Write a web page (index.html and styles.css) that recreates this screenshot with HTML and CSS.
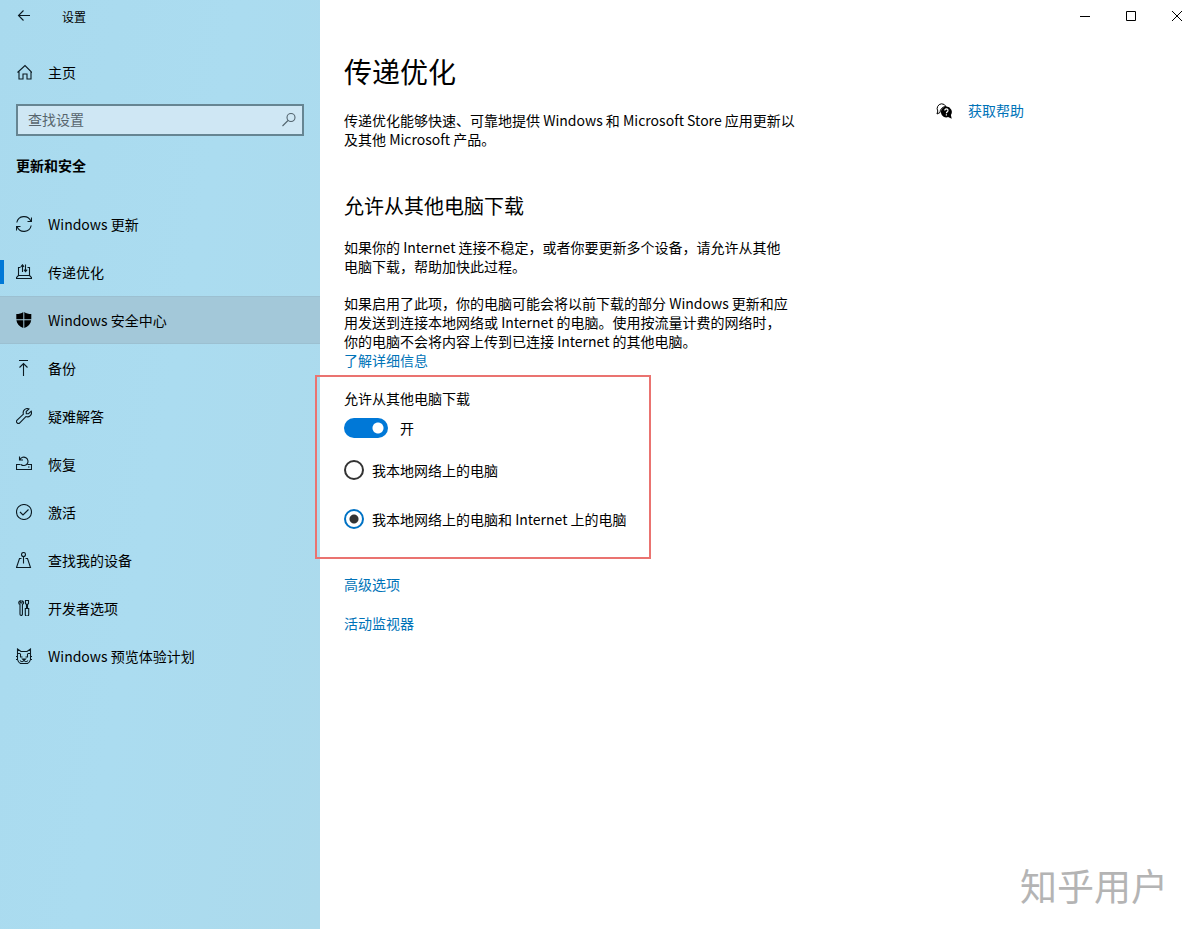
FILE: index.html
```html
<!DOCTYPE html>
<html lang="zh-CN">
<head>
<meta charset="utf-8">
<meta name="viewport" content="width=device-width, initial-scale=1">
<title>设置</title>
<link rel="stylesheet" href="styles.css">
</head>
<body>
<div class="window">
  <aside class="sidebar">
    <header class="app-bar">
      <button class="back" type="button" aria-label="返回">
        <svg class="icon" viewBox="0 0 16 16"><path d="M14 7.500H2.500M7.500 2.500l-5 5 5 5"/></svg>
      </button>
      <span class="app-name">设置</span>
    </header>
    <a class="nav-link home" href="#home">
      <svg class="icon" viewBox="0 0 16 16"><path d="M3 7v8h4v-5h4v5h4V7M1.500 8.500L9 1.500l7 7"/></svg>
      <span>主页</span>
    </a>
    <div class="search">
      <input class="search-input" type="search" placeholder="查找设置" aria-label="查找设置">
      <svg class="icon search-icon" viewBox="0 0 16 16"><circle cx="10" cy="5.500" r="4"/><path d="M7 8.500L1.500 14"/></svg>
    </div>
    <h2 class="group-title">更新和安全</h2>
    <nav class="nav">
      <a class="nav-link" href="#update">
        <svg class="icon" viewBox="0 0 16 16"><path d="M.8 6.500A7.400 7.400 0 0 1 14.800 5M15.500 1.500V5.500H11.500M15.200 9.500A7.400 7.400 0 0 1 1.200 11M.5 14.500V10.500H4.500"/></svg>
        <span>Windows 更新</span>
      </a>
      <a class="nav-link is-current" href="#delivery" aria-current="page">
        <svg class="icon" viewBox="0 0 16 16"><path d="M4.500 3.500h-2v8l-2 2v1h15v-1l-2-2v-8h-2M2.500 11.500h11M6.500 8V.8M4.800 2.800l1.700-2 1.500 2M9.500.5v7.200M8 5.700l1.500 2 1.700-2"/></svg>
        <span>传递优化</span>
      </a>
      <a class="nav-link is-hover" href="#security">
        <svg class="icon icon-solid" viewBox="0 0 16 16"><path d="M7.300 0C5.500 1.500 3 2 .3 2v5.300h7zM8.300 0v7.300h7V2C12.600 2 10.100 1.500 8.300 0zM.4 8.300h6.900V16C3.500 14.500.8 12 .4 8.300zM8.300 8.300h6.900C14.800 12 12.100 14.500 8.300 16z"/></svg>
        <span>Windows 安全中心</span>
      </a>
      <a class="nav-link" href="#backup">
        <svg class="icon" viewBox="0 0 16 16"><path d="M3 .5h9M7.500 16V3.500M3.500 7.500l4-4 4 4"/></svg>
        <span>备份</span>
      </a>
      <a class="nav-link" href="#troubleshoot">
        <svg class="icon" viewBox="0 0 16 16"><path d="M13 .9a4.200 4.200 0 0 0-5.600 5.200L1.100 12.200a1.900 1.900 0 0 0 2.700 2.700L9.900 8.600a4.200 4.200 0 0 0 5.300-5.500l-2.700 2.600-2.200-.1-.1-2.100z"/></svg>
        <span>疑难解答</span>
      </a>
      <a class="nav-link" href="#recovery">
        <svg class="icon" viewBox="0 0 16 16"><path d="M4.500 8.500h-4v5h15v-5h-4M12 11h1.500M4 3.500A4.200 4.200 0 1 1 5 8.500M3.500.5v3.500h3.500"/></svg>
        <span>恢复</span>
      </a>
      <a class="nav-link" href="#activation">
        <svg class="icon" viewBox="0 0 16 16"><circle cx="8" cy="8" r="7.500"/><path d="M4 8l3 3 5.500-5.500"/></svg>
        <span>激活</span>
      </a>
      <a class="nav-link" href="#find">
        <svg class="icon" viewBox="0 0 16 16"><circle cx="7.500" cy="2.500" r="2"/><path d="M7.500 4.500v7M5.500 6.500h-2l-3 9h14l-3-9h-2"/></svg>
        <span>查找我的设备</span>
      </a>
      <a class="nav-link" href="#developers">
        <svg class="icon" viewBox="0 0 16 16"><path d="M4.300.7a2 2 0 0 0-.3 3.800v9.700a1.200 1.200 0 0 0 2.400 0V4.500A2 2 0 0 0 6 .7V3H4.300zM9.500.5h3v3l-1 1v4h-1v-4l-1-1zM9.300 8.500h3.400v6a1.500 1.500 0 0 1-3.400 0z"/></svg>
        <span>开发者选项</span>
      </a>
      <a class="nav-link" href="#insider">
        <svg class="icon" viewBox="0 0 16 16"><path d="M1.500 11V1l3.500 2.500h6L14.500 1v10M1.500 5.500h3M14.500 5.500h-3M0 8.500h2M14 8.500h2M0 11.500h1.500q.5 2.500 3 4h7q2.500-1.500 3-4H16M4.500 6v3h2M11.500 6v3h-2M6.500 11h3L8 12.500zM4 12.500q2 2.500 4 0 2 2.500 4 0"/></svg>
        <span>Windows 预览体验计划</span>
      </a>
    </nav>
  </aside>

  <main class="main">
    <div class="caption">
      <button class="caption-btn" type="button" aria-label="最小化"><svg class="glyph" viewBox="0 0 12 12"><path d="M1 6.500h10"/></svg></button>
      <button class="caption-btn" type="button" aria-label="最大化"><svg class="glyph" viewBox="0 0 12 12"><path d="M1.500 1.500h9v9h-9z"/></svg></button>
      <button class="caption-btn" type="button" aria-label="关闭"><svg class="glyph" viewBox="0 0 12 12"><path d="M1 1l10 10M11 1L1 11"/></svg></button>
    </div>
    <div class="page">
      <div class="content">
        <h1 class="title">传递优化</h1>
        <p class="text">传递优化能够快速、可靠地提供 Windows 和 Microsoft Store 应用更新以<br>及其他 Microsoft 产品。</p>
        <h2 class="subtitle">允许从其他电脑下载</h2>
        <p class="text">如果你的 Internet 连接不稳定，或者你要更新多个设备，请允许从其他<br>电脑下载，帮助加快此过程。</p>
        <p class="text spaced">如果启用了此项，你的电脑可能会将以前下载的部分 Windows 更新和应<br>用发送到连接本地网络或 Internet 的电脑。使用按流量计费的网络时，<br>你的电脑不会将内容上传到已连接 Internet 的其他电脑。<br><a class="link" href="#more">了解详细信息</a></p>
        <div class="options">
          <label class="option-title" for="allow">允许从其他电脑下载</label>
          <div class="switch-row">
            <input class="switch" id="allow" type="checkbox" role="switch" checked>
            <span>开</span>
          </div>
          <label class="radio-row"><input class="radio" type="radio" name="source"><span>我本地网络上的电脑</span></label>
          <label class="radio-row"><input class="radio" type="radio" name="source" checked><span>我本地网络上的电脑和 Internet 上的电脑</span></label>
        </div>
        <div class="links">
          <a class="link" href="#advanced">高级选项</a>
          <a class="link" href="#monitor">活动监视器</a>
        </div>
      </div>
      <a class="link help" href="#help">
        <svg class="help-icon" viewBox="0 0 16 16"><path class="bubble" d="M4 9.500l-3 1.500.8-3A4.800 4.800 0 0 1 5.500.8 5 5 0 0 1 10 3.500M4 9.500a6 6 0 0 1 6-6"/><path class="bubble-solid" d="M10.300 3.600a5.400 5.400 0 1 0 1.800 10.500l3.600 1.600-.8-3.700a5.400 5.400 0 0 0-4.600-8.400z"/><path class="question" d="M8.800 7.500a1.600 1.600 0 1 1 2.400 1.400q-.8.400-.8 1.300M10.400 11.300v1.300"/></svg>
        <span>获取帮助</span>
      </a>
    </div>
  </main>
  <div class="watermark">知乎用户</div>
</div>
</body>
</html>
```
FILE: styles.css
```css
*,
*::before {
  box-sizing: border-box;
}

body {
  margin: 0;
  background: #fff;
  color: #000;
  font: 14px/19px "Noto Sans CJK SC", sans-serif;
}

h1,
h2,
p {
  margin: 0;
  font-weight: 400;
}

button {
  padding: 0;
  border: 0;
  background: none;
  color: inherit;
}

.window {
  display: flex;
  min-height: 100vh;
  position: relative;
}

.sidebar {
  flex: 0 0 320px;
  background: linear-gradient(100deg, #a9daee, #abdcf0 50%, #acdaec);
}

.icon {
  flex: none;
  width: 16px;
  height: 16px;
  fill: none;
  stroke: #0b1a22;
  stroke-width: 1.1;
}

.icon-solid {
  fill: #000;
  stroke: none;
}

.app-bar {
  display: flex;
  align-items: center;
  height: 32px;
  font-size: 12px;
}

.back {
  display: grid;
  place-items: center;
  width: 48px;
  height: 32px;
}

.app-name {
  padding-left: 14px;
}

.nav-link {
  display: flex;
  align-items: center;
  gap: 16px;
  height: 48px;
  padding: 0 16px;
  color: #000;
  text-decoration: none;
}

.home {
  margin-top: 16px;
}

.search {
  position: relative;
  margin: 8px 16px 0;
}

.search-input {
  display: block;
  width: 100%;
  height: 32px;
  padding: 0 36px 2px 10px;
  border: 2px solid #668592;
  border-radius: 0;
  outline: 0;
  background: #cfe7f4;
  font: inherit;
  appearance: none;
}

.search-input::placeholder {
  color: #57656d;
  opacity: 1;
}

.search-icon {
  position: absolute;
  top: 8px;
  right: 7px;
  stroke: #53646e;
}

.group-title {
  margin: 19px 16px 25px;
  font-size: 14px;
  line-height: 20px;
  font-weight: 700;
}

.is-current {
  background: linear-gradient(#0078d7, #0078d7) 0 50% / 4px 24px no-repeat;
}

.is-hover {
  background: #a3c8d9;
  border: 1px solid #9cc0d1;
  border-width: 1px 0;
}

.main {
  flex: 1;
  min-width: 0;
}

.caption {
  display: flex;
  justify-content: flex-end;
  height: 32px;
}

.caption-btn {
  display: grid;
  place-items: center;
  width: 46px;
}

.glyph {
  width: 12px;
  height: 12px;
  fill: none;
  stroke: #000;
}

.page {
  display: grid;
  grid-template-columns: minmax(0, 464px) auto;
  justify-content: start;
  align-items: start;
  column-gap: 128px;
  padding: 19px 24px 40px;
}

.title {
  font-size: 28px;
  line-height: 40px;
  margin-bottom: 20px;
}

.text {
  white-space: nowrap;
}

.spaced {
  margin-top: 18px;
}

.subtitle {
  margin: 43px 0 18px;
  font-size: 20px;
  line-height: 28px;
}

.link {
  color: #0073b8;
  text-decoration: none;
}

.options {
  position: relative;
  padding-top: 19px;
}

.options::before {
  content: "";
  position: absolute;
  top: 5px;
  left: -29px;
  width: 336px;
  height: 184px;
  border: 2px solid #ea7370;
  pointer-events: none;
}

.option-title {
  display: block;
}

.switch-row {
  display: flex;
  align-items: center;
  gap: 12px;
  height: 20px;
  margin: 10px 0 22px;
}

.switch {
  appearance: none;
  width: 44px;
  height: 20px;
  margin: 0;
  border-radius: 10px;
  background: radial-gradient(circle at 34px 10px, #fff 5px, transparent 6px) #0078d7;
}

.radio-row {
  display: flex;
  align-items: center;
  gap: 8px;
  height: 20px;
}

.radio-row + .radio-row {
  margin-top: 29px;
}

.radio {
  appearance: none;
  width: 20px;
  height: 20px;
  margin: 0;
  border: 2px solid #333;
  border-radius: 50%;
}

.radio:checked {
  border-color: #0072c4;
  background: radial-gradient(circle at center, #333 4px, transparent 5px);
}

.links {
  display: flex;
  flex-direction: column;
  align-items: flex-start;
  gap: 20px;
  margin-top: 46px;
}

.help {
  display: flex;
  align-items: center;
  gap: 16px;
  margin-top: 50px;
}

.help-icon {
  width: 16px;
  height: 16px;
  fill: none;
  stroke: #000;
}

.help-icon .bubble-solid {
  fill: #000;
  stroke: none;
}

.help-icon .question {
  stroke: #fff;
  stroke-width: 1.2;
}

.watermark {
  position: absolute;
  right: 32px;
  bottom: 24px;
  color: #b4b4b4;
  font-size: 37px;
  line-height: 40px;
}
```
